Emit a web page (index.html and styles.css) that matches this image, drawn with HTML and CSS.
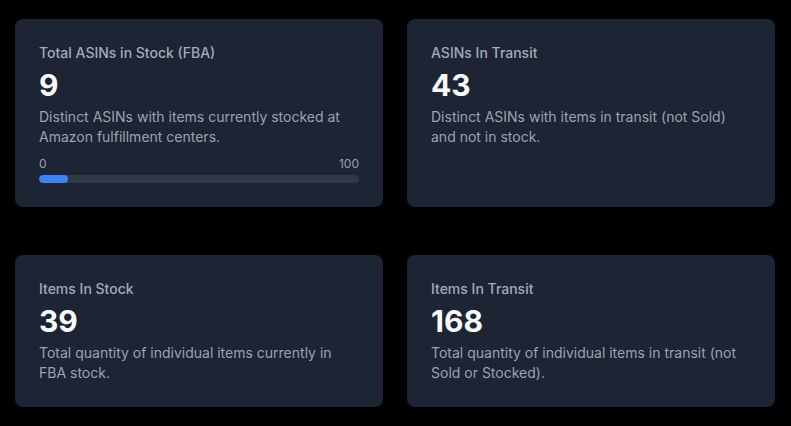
FILE: index.html
```html
<!DOCTYPE html>
<html>
<head>
<meta charset="utf-8">
<link rel="stylesheet" href="styles.css">
</head>
<body>
<div class="grid">
  <div class="card">
    <div class="title">Total ASINs in Stock (FBA)</div>
    <div class="value">9</div>
    <div class="desc">Distinct ASINs with items currently stocked at Amazon fulfillment centers.</div>
    <div class="progress">
      <div class="labels"><span>0</span><span>100</span></div>
      <div class="track"><div class="fill" style="width:9%"></div></div>
    </div>
  </div>
  <div class="card">
    <div class="title">ASINs In Transit</div>
    <div class="value">43</div>
    <div class="desc">Distinct ASINs with items in transit (not Sold) and not in stock.</div>
  </div>
  <div class="card">
    <div class="title">Items In Stock</div>
    <div class="value">39</div>
    <div class="desc">Total quantity of individual items currently in FBA stock.</div>
  </div>
  <div class="card">
    <div class="title">Items In Transit</div>
    <div class="value">168</div>
    <div class="desc">Total quantity of individual items in transit (not Sold or Stocked).</div>
  </div>
</div>
</body>
</html>
```

FILE: styles.css
```css
html, body {
  margin: 0;
  padding: 0;
  background: #000;
}
body {
  font-family: Inter, "Noto Sans", sans-serif;
  color: #9ca3af;
}
.grid {
  display: grid;
  grid-template-columns: 368px 368px;
  column-gap: 24px;
  row-gap: 48px;
  padding: 19px 16px 0 15px;
  align-items: stretch;
}
.card {
  background: #1d2433;
  border-radius: 8px;
  padding: 24px;
}
.title {
  font-size: 14px;
  line-height: 20px;
  font-weight: 500;
  color: #a3abb9;
}
.value {
  margin-top: 4px;
  font-size: 30px;
  line-height: 36px;
  font-weight: 700;
  color: #f9fafb;
}
.desc {
  margin-top: 4px;
  font-size: 14px;
  line-height: 20px;
  color: #9ca3af;
}
.progress {
  margin-top: 9px;
}
.labels {
  display: flex;
  justify-content: space-between;
  font-size: 12px;
  line-height: 16px;
  color: #9ca3af;
  margin-bottom: 3px;
}
.track {
  height: 8px;
  border-radius: 9999px;
  background: #2f3849;
  overflow: hidden;
}
.fill {
  height: 100%;
  background: #3b82f6;
  border-radius: 9999px;
}
```
